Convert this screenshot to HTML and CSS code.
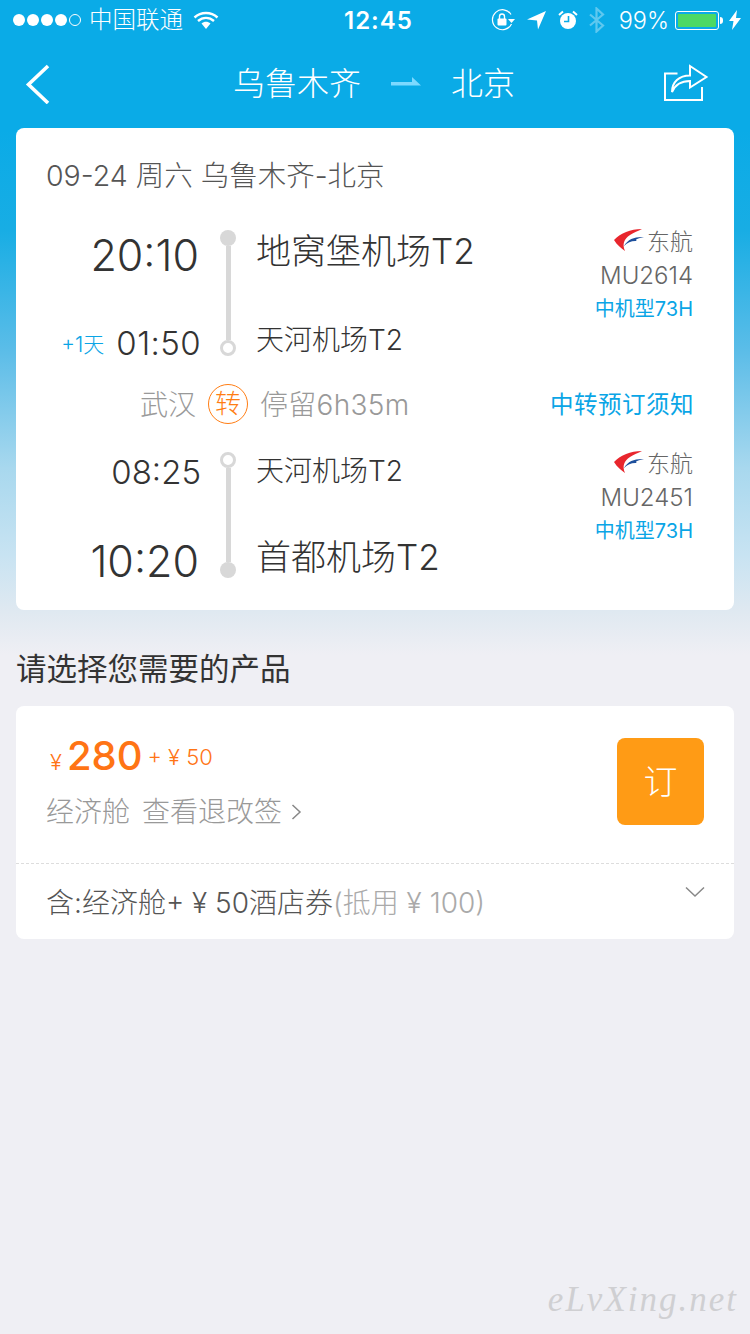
FILE: index.html
```html
<!DOCTYPE html>
<html lang="zh-CN">
<head>
    <meta charset="UTF-8">
    <meta name="viewport" content="width=device-width, initial-scale=1.0">
    <title>乌鲁木齐 - 北京</title>
    <link rel="stylesheet" href="styles.css">
</head>
<body>
    <div class="page">
        <div class="status-bar">
            <div class="status-left">
                <span class="signal"><i></i><i></i><i></i><i></i><i class="off"></i></span>
                <span class="carrier">中国联通</span>
                <svg class="wifi" width="26" height="20" viewBox="0 0 26 20">
                    <path d="M1.5 7.5C8 1.5 18 1.5 24.500 7.500M5 11C9.800 6.800 16.200 6.800 21 11" fill="none" stroke="#fff" stroke-width="2.400"/>
                    <path d="M8.500 13.500C11.200 11.200 14.800 11.200 17.500 13.500L13 19Z" fill="#fff"/>
                </svg>
            </div>
            <div class="status-time">12:45</div>
            <div class="status-right">
                <svg width="26" height="24" viewBox="0 0 26 24">
                    <path d="M20 6.500A10 10 0 1 0 20.500 16" fill="none" stroke="#fff" stroke-width="1.200"/>
                    <path d="M17 11h7l-3.500 4z" fill="#fff"/>
                    <rect x="6.500" y="10.500" width="9" height="7" rx="1" fill="#fff"/>
                    <path d="M8.500 11V8.500a2.500 2.500 0 0 1 5 0V11" fill="none" stroke="#fff" stroke-width="1.400"/>
                </svg>
                <svg class="st-loc" width="20" height="20" viewBox="0 0 20 20"><path d="M0 9.500L19 1 11 19.500 10 10.500Z" fill="#fff"/></svg>
                <svg class="st-alarm" width="20" height="20" viewBox="0 0 20 20">
                    <circle cx="10" cy="11" r="8" fill="#fff"/>
                    <path d="M1 5L5 1.500M19 5L15 1.500" stroke="#fff" stroke-width="2"/>
                    <path d="M10.500 6v5.500H6" fill="none" stroke="#0aabe7" stroke-width="1.600"/>
                </svg>
                <svg class="st-bt" width="18" height="26" viewBox="0 0 18 26">
                    <path d="M2 7.500L15 18.500 8.500 24.500V1.500L15 7.500 2 18.500" fill="none" stroke="#fff" stroke-opacity=".35" stroke-width="2.200"/>
                </svg>
                <span class="battery-pct">99%</span>
                <span class="battery"><span class="battery-fill"></span></span>
                <span class="battery-tip"></span>
                <svg class="st-bolt" width="12" height="20" viewBox="0 0 12 20"><path d="M8 0L0 11h4.500L3 20l9-12H7z" fill="#fff"/></svg>
            </div>
        </div>

        <header class="nav-bar">
            <svg class="back" width="26" height="40" viewBox="0 0 26 40"><path d="M23 2L3.500 20.500 23 39" fill="none" stroke="#fff" stroke-width="3.600"/></svg>
            <div class="route">
                <span>乌鲁木齐</span>
                <svg class="route-arrow" width="30" height="12" viewBox="0 0 30 12"><path d="M0 5h21V0l9 8.500H0z" fill="#7dd9ff"/></svg>
                <span>北京</span>
            </div>
            <svg class="share" width="46" height="38" viewBox="0 0 46 38">
                <path d="M14.500 9.500H2v26.500h37V23" fill="none" stroke="#fff" stroke-width="2"/>
                <path d="M9 28C9 18 16 11.500 27 11.500V2L43.500 13 27 23.500V17C18 17 12 21 9 28Z" fill="none" stroke="#fff" stroke-width="2"/>
            </svg>
        </header>

        <section class="card flight-card">
            <h2 class="flight-date">09-24 周六 乌鲁木齐-北京</h2>

            <div class="segment">
                <div class="times">
                    <div class="time time-big">20:10</div>
                    <div class="time-row"><span class="next-day">+1天</span><span class="time">01:50</span></div>
                </div>
                <div class="track"><i class="dot"></i><i class="bar"></i><i class="ring"></i></div>
                <div class="airports">
                    <div class="airport airport-big">地窝堡机场T2</div>
                    <div class="airport">天河机场T2</div>
                </div>
                <div class="flight-info">
                    <div class="airline">
                        <svg width="30" height="24" viewBox="0 0 30 24">
                            <path d="M28 1C16 1 7 5 0 12 3 17 7 20 11 23 8 16 10 11 16 7 20 4.500 24 3 28 1Z" fill="#e8262d"/>
                            <path d="M30 9C21 8.500 14 11 10 18 14 14 18 12.500 23 13 20 12 24 10 30 9Z" fill="#1d4f9c"/>
                        </svg>
                        <span>东航</span>
                    </div>
                    <div class="flight-no">MU2614</div>
                    <div class="plane">中机型73H</div>
                </div>
            </div>

            <div class="transfer">
                <span class="transfer-city">武汉</span>
                <span class="transfer-badge">转</span>
                <span class="transfer-stay">停留6h35m</span>
                <a class="transfer-link" href="#">中转预订须知</a>
            </div>

            <div class="segment segment-second">
                <div class="times">
                    <div class="time">08:25</div>
                    <div class="time time-big">10:20</div>
                </div>
                <div class="track"><i class="ring"></i><i class="bar"></i><i class="dot"></i></div>
                <div class="airports">
                    <div class="airport">天河机场T2</div>
                    <div class="airport airport-big">首都机场T2</div>
                </div>
                <div class="flight-info">
                    <div class="airline">
                        <svg width="30" height="24" viewBox="0 0 30 24">
                            <path d="M28 1C16 1 7 5 0 12 3 17 7 20 11 23 8 16 10 11 16 7 20 4.500 24 3 28 1Z" fill="#e8262d"/>
                            <path d="M30 9C21 8.500 14 11 10 18 14 14 18 12.500 23 13 20 12 24 10 30 9Z" fill="#1d4f9c"/>
                        </svg>
                        <span>东航</span>
                    </div>
                    <div class="flight-no">MU2451</div>
                    <div class="plane">中机型73H</div>
                </div>
            </div>
        </section>

        <h3 class="section-title">请选择您需要的产品</h3>

        <section class="card product-card">
            <div class="product-main">
                <div class="product-text">
                    <div class="price">
                        <span class="price-yen">¥</span><span class="price-num">280</span><span class="price-extra">+ ¥ 50</span>
                    </div>
                    <div class="cabin">
                        <span>经济舱</span><span>查看退改签</span>
                        <svg width="11" height="18" viewBox="0 0 11 18"><path d="M1.500 2L9 9 1.500 16" fill="none" stroke="#888" stroke-width="1.500"/></svg>
                    </div>
                </div>
                <button class="book-btn">订</button>
            </div>
            <div class="product-foot">
                <div class="includes">含:经济舱+ ¥ 50酒店券<span class="includes-note">(抵用 ¥ 100)</span></div>
                <svg class="foot-arrow" width="20" height="12" viewBox="0 0 20 12"><path d="M1 1.500L10 10 19 1.500" fill="none" stroke="#888" stroke-width="1.500"/></svg>
            </div>
        </section>

        <div class="watermark">eLvXing.net</div>
    </div>
</body>
</html>
```

FILE: styles.css
```css
* {
    box-sizing: border-box;
    margin: 0;
    padding: 0;
}
body {
    font-family: Inter, "Noto Sans CJK SC", sans-serif;
    font-weight: 300;
    color: #333;
    background-color: #efeff4;
}
.page {
    position: relative;
    width: 750px;
    height: 1334px;
    overflow: hidden;
    background: linear-gradient(to bottom, #0aabe7 130px, #18ade4 230px, #5cbde8 352px, #a8d8ee 468px, #c8e3f2 555px, #e0e9f1 613px, #efeff4 655px);
}

/* status bar */
.status-bar {
    height: 40px;
    padding: 0 9px 0 13px;
    display: flex;
    align-items: center;
    justify-content: space-between;
    color: #fff;
    position: relative;
}
.status-left,
.status-right {
    display: flex;
    align-items: center;
}
.signal {
    display: flex;
    gap: 2px;
}
.signal i {
    width: 12px;
    height: 12px;
    border-radius: 50%;
    background-color: #fff;
}
.signal i.off {
    background: none;
    border: 1px solid #fff;
}
.carrier {
    font-size: 23.500px;
    line-height: 34px;
    margin-left: 8px;
}
.wifi {
    margin-left: 10px;
}
.status-time {
    position: absolute;
    left: 344px;
    top: 6px;
    font-size: 24px;
    font-weight: 600;
    letter-spacing: 1px;
}
.st-loc {
    margin-left: 10px;
}
.st-alarm {
    margin-left: 11px;
}
.st-bt {
    margin-left: 10px;
}
.battery-pct {
    font-size: 23.500px;
    margin-left: 13px;
}
.battery {
    width: 44px;
    height: 19px;
    margin-left: 6px;
    padding: 2px;
    border: 1px solid #fff;
    border-radius: 3px;
    display: block;
}
.battery-fill {
    display: block;
    height: 100%;
    background-color: #4cd964;
    border-radius: 1px;
}
.battery-tip {
    width: 3px;
    height: 7px;
    margin-left: 1px;
    background-color: #fff;
    border-radius: 0 3px 3px 0;
}
.st-bolt {
    margin-left: 6px;
}

/* nav bar */
.nav-bar {
    height: 88px;
    padding: 0 41px 0 25px;
    display: flex;
    align-items: center;
    justify-content: space-between;
}
.route {
    display: flex;
    align-items: center;
    gap: 30px;
    margin: 0 0 6px 34px;
    font-size: 32px;
    color: #fff;
}
.route-arrow {
    margin-top: 4px;
}
.share {
    margin-bottom: 2px;
}

/* cards */
.card {
    margin: 0 16px;
    background-color: #fff;
    border-radius: 8px;
}
.flight-card {
    height: 482px;
    padding-top: 27px;
}
.flight-date {
    padding-left: 30px;
    font-size: 28.500px;
    line-height: 42px;
    font-weight: 300;
    color: #555;
}
.segment {
    height: 126px;
    margin-top: 33px;
    display: flex;
}
.segment-second {
    margin-top: 0;
}
.times {
    width: 184px;
    display: flex;
    flex-direction: column;
    justify-content: space-between;
    align-items: flex-end;
}
.time {
    font-size: 33px;
    line-height: 38px;
    margin-right: -1px;
}
.time-big {
    font-size: 43px;
    line-height: 50px;
    margin-right: 1px;
}
.time-row {
    display: flex;
    align-items: center;
    gap: 12px;
    margin-bottom: -6px;
}
.time-row .time {
    letter-spacing: .4px;
}
.segment-second .time-big {
    margin-bottom: -8px;
}
.segment-second .time:first-child {
    margin-top: 1px;
}
.next-day {
    font-size: 21px;
    color: #0aa5e6;
}
.track {
    width: 56px;
    display: flex;
    flex-direction: column;
    align-items: center;
}
.track i {
    display: block;
}
.dot {
    width: 16px;
    height: 16px;
    border-radius: 50%;
    background-color: #d8d8d8;
}
.ring {
    width: 16px;
    height: 16px;
    border-radius: 50%;
    border: 3px solid #d8d8d8;
}
.bar {
    flex: 1;
    width: 5px;
    background-color: #d8d8d8;
}
.airports {
    flex: 1;
    display: flex;
    flex-direction: column;
    justify-content: space-between;
}
.airport {
    font-size: 28px;
    line-height: 40px;
    margin-bottom: -4px;
}
.airport-big {
    font-size: 35px;
    line-height: 46px;
    margin: -2px 0 0;
}
.segment-second .airport {
    margin: -1px 0 0;
}
.segment-second .airport-big {
    margin: 0 0 -2px;
}
.flight-info {
    padding-right: 41px;
    text-align: right;
}
.airline {
    display: flex;
    justify-content: flex-end;
    align-items: center;
    gap: 3px;
    height: 30px;
    margin-top: -5px;
    font-size: 23px;
    color: #666;
}
.flight-no {
    margin-top: 5px;
    font-size: 24px;
    line-height: 32px;
    color: #666;
}
.plane {
    margin-top: 2px;
    font-size: 20px;
    line-height: 30px;
    font-weight: 400;
    color: #0aa5e6;
}
.transfer {
    height: 96px;
    display: flex;
    align-items: center;
    padding: 0 40px 2px 124px;
    font-size: 28px;
    color: #999;
}
.transfer-stay {
    letter-spacing: .3px;
}
.transfer-badge {
    width: 40px;
    height: 40px;
    margin: 2px 12px 0;
    border: 1px solid #ff7d13;
    border-radius: 50%;
    color: #ff7d13;
    font-size: 26px;
    line-height: 38px;
    text-align: center;
}
.transfer-link {
    margin-left: auto;
    font-size: 23.500px;
    font-weight: 400;
    letter-spacing: .5px;
    color: #0aa5e6;
    text-decoration: none;
}

/* products */
.section-title {
    margin: 37px 0 0 16px;
    height: 59px;
    font-size: 30.500px;
    line-height: 44px;
    font-weight: 400;
    color: #333;
}
.product-card {
    height: 233px;
}
.product-main {
    height: 158px;
    padding: 30px 30px 0;
    display: flex;
    justify-content: space-between;
    align-items: flex-start;
    border-bottom: 1px dashed #ddd;
}
.price {
    display: flex;
    align-items: baseline;
    height: 44px;
    color: #ff7415;
}
.price-yen {
    font-size: 22px;
    margin: 0 5px 0 4px;
}
.price-num {
    font-size: 40px;
    font-weight: 500;
    line-height: 40px;
}
.price-extra {
    font-size: 22px;
    margin-left: 5px;
    position: relative;
    top: -5px;
}
.cabin {
    display: flex;
    align-items: center;
    margin-top: 11px;
    font-size: 28px;
    line-height: 42px;
    color: #999;
}
.cabin span + span {
    margin-left: 12px;
}
.cabin svg {
    margin-left: 9px;
}
.book-btn {
    width: 87px;
    height: 87px;
    margin-top: 2px;
    padding-bottom: 5px;
    border: 0;
    border-radius: 8px;
    background-color: #ff9b15;
    color: #fff;
    font-family: inherit;
    font-size: 34px;
    font-weight: 300;
}
.product-foot {
    height: 74px;
    padding: 0 29px 0 30px;
    display: flex;
    justify-content: space-between;
    align-items: center;
}
.includes {
    font-size: 28px;
    color: #555;
}
.includes-note {
    color: #aaa;
}
.foot-arrow {
    margin-top: -19px;
}

.watermark {
    position: absolute;
    right: 12px;
    bottom: 14px;
    font-family: "Liberation Serif", serif;
    font-style: italic;
    font-size: 35px;
    letter-spacing: 2px;
    color: #cfcfd2;
}
```
